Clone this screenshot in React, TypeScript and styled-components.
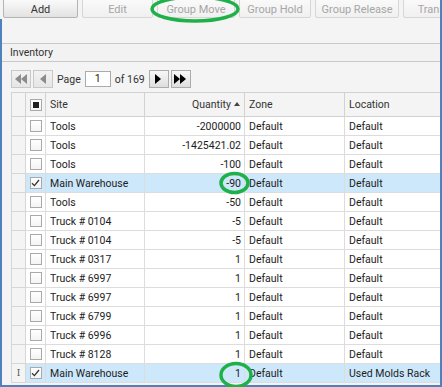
import React from "react";
import styled, { createGlobalStyle } from "styled-components";

const GlobalStyle = createGlobalStyle`
  html, body {
    margin: 0;
    padding: 0;
    background: #ffffff;
  }
  body {
    font-family: Roboto, "Open Sans", Arial, sans-serif;
    font-size: 10.5px;
    color: #222222;
  }
`;

const Page = styled.div`
  position: relative;
  width: 442px;
  height: 387px;
  overflow: hidden;
  background: #f4f4f4;
`;

// top toolbar with the action buttons
const Toolbar = styled.div`
  display: flex;
  gap: 4px;
  height: 19px;
  padding-left: 3px;
  background: #f4f4f4;
  border-right: 2px solid #4f81bd;
  overflow: hidden;
`;

const ToolButton = styled.div<{ $w: number; $enabled?: boolean }>`
  flex: 0 0 ${(p) => p.$w}px;
  height: 20px;
  margin-top: -2px;
  box-sizing: border-box;
  border: 1px solid ${(p) => (p.$enabled ? "#b4b4b4" : "#d6d6d6")};
  border-radius: 2px;
  background: ${(p) =>
    p.$enabled
      ? "linear-gradient(#fbfbfb, #e2e2e2)"
      : "linear-gradient(#fafafa, #f0f0f0)"};
  color: ${(p) => (p.$enabled ? "#333333" : "#a6a6a6")};
  font-size: 11px;
  line-height: 21px;
  text-align: center;
  white-space: nowrap;
  overflow: hidden;
`;

const Body = styled.div`
  height: 366px;
  border-left: 2px solid #4f81bd;
  border-right: 2px solid #4f81bd;
  border-bottom: 2px solid #4f81bd;
  display: flex;
  flex-direction: column;
`;

const Spacer = styled.div`
  height: 24px;
  background: #f4f4f4;
`;

const SectionHeader = styled.div`
  height: 17px;
  border-top: 1px solid #c9c9c9;
  border-bottom: 1px solid #c9c9c9;
  background: #f2f2f2;
  padding-left: 8px;
  font-size: 10.5px;
  line-height: 17px;
  color: #333333;
`;

const Content = styled.div`
  flex: 1;
  padding: 8px 0 0 9px;
  display: flex;
  flex-direction: column;
  gap: 4px;
  overflow: hidden;
`;

const Pager = styled.div`
  display: flex;
  align-items: center;
  height: 18px;
  gap: 2px;
`;

const PagerButton = styled.div<{ $enabled?: boolean }>`
  width: 20px;
  height: 18px;
  box-sizing: border-box;
  border: 1px solid ${(p) => (p.$enabled ? "#acacac" : "#c8c8c8")};
  background: ${(p) =>
    p.$enabled ? "linear-gradient(#f8f8f8, #dedede)" : "linear-gradient(#f2f2f2, #e6e6e6)"};
  display: flex;
  align-items: center;
  justify-content: center;
`;

const PagerText = styled.span`
  font-size: 10.5px;
  color: #333333;
  margin: 0 2px;
`;

const PageInput = styled.div`
  width: 26px;
  height: 16px;
  box-sizing: border-box;
  border: 1px solid #aaaaaa;
  background: #ffffff;
  font-size: 10.5px;
  line-height: 14px;
  text-align: center;
  color: #222222;
`;

const Grid = styled.table`
  border-collapse: collapse;
  table-layout: fixed;
  width: 431px;
  background: #ffffff;
`;

const HeadCell = styled.th<{ $align?: string }>`
  height: 24px;
  padding: 0 4px;
  box-sizing: border-box;
  border: 1px solid #d2d2d2;
  background: #f4f4f4;
  font-weight: normal;
  font-size: 10.5px;
  color: #333333;
  text-align: ${(p) => p.$align || "left"};
  white-space: nowrap;
  overflow: hidden;
`;

const Row = styled.tr<{ $selected?: boolean }>`
  height: 19px;
  background: ${(p) => (p.$selected ? "#cde8fb" : "#ffffff")};
`;

const Cell = styled.td<{ $align?: string }>`
  padding: 0 3px 0 4px;
  border: 1px solid #dcdcdc;
  font-size: 10.5px;
  color: #1c1c1c;
  text-align: ${(p) => p.$align || "left"};
  white-space: nowrap;
  overflow: hidden;
`;

const RowHeadCell = styled.td`
  padding: 0;
  border: 1px solid #d6d6d6;
  background: #f4f4f4;
  text-align: center;
  font-size: 9px;
  color: #555555;
  font-family: "DejaVu Serif", serif;
`;

const BoxCell = styled.td`
  padding: 0;
  border: 1px solid #dcdcdc;
`;

const CheckBox = styled.div`
  width: 12px;
  height: 12px;
  box-sizing: border-box;
  margin: 0 auto;
  border: 1px solid #a9a9a9;
  background: linear-gradient(#ffffff, #f4f4f4);
  display: flex;
  align-items: center;
  justify-content: center;
`;

const Indeterminate = styled.div`
  width: 6px;
  height: 6px;
  background: #1e1e1e;
`;

const SortArrow = styled.span`
  display: inline-block;
  margin-left: 3px;
  width: 0;
  height: 0;
  border-left: 3.5px solid transparent;
  border-right: 3.5px solid transparent;
  border-bottom: 4px solid #444444;
  vertical-align: 2px;
`;

const Overlay = styled.svg`
  position: absolute;
  left: 0;
  top: 0;
  pointer-events: none;
`;

const rows = [
  { site: "Tools", qty: "-2000000", zone: "Default", loc: "Default" },
  { site: "Tools", qty: "-1425421.02", zone: "Default", loc: "Default" },
  { site: "Tools", qty: "-100", zone: "Default", loc: "Default" },
  { site: "Main Warehouse", qty: "-90", zone: "Default", loc: "Default", sel: true },
  { site: "Tools", qty: "-50", zone: "Default", loc: "Default" },
  { site: "Truck # 0104", qty: "-5", zone: "Default", loc: "Default" },
  { site: "Truck # 0104", qty: "-5", zone: "Default", loc: "Default" },
  { site: "Truck # 0317", qty: "1", zone: "Default", loc: "Default" },
  { site: "Truck # 6997", qty: "1", zone: "Default", loc: "Default" },
  { site: "Truck # 6997", qty: "1", zone: "Default", loc: "Default" },
  { site: "Truck # 6799", qty: "1", zone: "Default", loc: "Default" },
  { site: "Truck # 6996", qty: "1", zone: "Default", loc: "Default" },
  { site: "Truck # 8128", qty: "1", zone: "Default", loc: "Default" },
  { site: "Main Warehouse", qty: "1", zone: "Default", loc: "Used Molds Rack", sel: true, cursor: true },
];

const Check = () => (
  <svg width="9" height="8" viewBox="0 0 9 8">
    <path d="M1 4.2 L3.4 6.6 L8 1" fill="none" stroke="#333" strokeWidth="1.3" />
  </svg>
);

const Arrows = ({ dir, double, color }: { dir: "l" | "r"; double?: boolean; color: string }) => {
  const one = (x: number) =>
    dir === "l" ? `M${x + 6} 1 L${x} 6 L${x + 6} 11 Z` : `M${x} 1 L${x + 6} 6 L${x} 11 Z`;
  return (
    <svg width={double ? 13 : 7} height="12" viewBox={`0 0 ${double ? 13 : 7} 12`}>
      <path d={one(0)} fill={color} />
      {double && <path d={one(6)} fill={color} />}
    </svg>
  );
};

export default function App() {
  return (
    <Page>
      <GlobalStyle />
      <Toolbar>
        <ToolButton $w={75} $enabled>Add</ToolButton>
        <ToolButton $w={71}>Edit</ToolButton>
        <ToolButton $w={78}>Group Move</ToolButton>
        <ToolButton $w={72}>Group Hold</ToolButton>
        <ToolButton $w={84}>Group Release</ToolButton>
        <ToolButton $w={70}>Transfer</ToolButton>
      </Toolbar>
      <Body>
        <Spacer />
        <SectionHeader>Inventory</SectionHeader>
        <Content>
          <Pager>
            <PagerButton><Arrows dir="l" double color="#8c8c8c" /></PagerButton>
            <PagerButton><Arrows dir="l" color="#8c8c8c" /></PagerButton>
            <PagerText>Page</PagerText>
            <PageInput>1</PageInput>
            <PagerText>of 169</PagerText>
            <PagerButton $enabled><Arrows dir="r" color="#000" /></PagerButton>
            <PagerButton $enabled><Arrows dir="r" double color="#000" /></PagerButton>
          </Pager>
          <Grid>
            <colgroup>
              <col style={{ width: 14 }} />
              <col style={{ width: 20 }} />
              <col style={{ width: 99 }} />
              <col style={{ width: 100 }} />
              <col style={{ width: 100 }} />
              <col style={{ width: 98 }} />
            </colgroup>
            <thead>
              <tr>
                <HeadCell />
                <HeadCell style={{ padding: 0 }}>
                  <CheckBox><Indeterminate /></CheckBox>
                </HeadCell>
                <HeadCell>Site</HeadCell>
                <HeadCell $align="right">
                  Quantity
                  <SortArrow />
                </HeadCell>
                <HeadCell>Zone</HeadCell>
                <HeadCell>Location</HeadCell>
              </tr>
            </thead>
            <tbody>
              {rows.map((r, i) => (
                <Row key={i} $selected={r.sel}>
                  <RowHeadCell>{r.cursor ? "I" : ""}</RowHeadCell>
                  <BoxCell>
                    <CheckBox>{r.sel && <Check />}</CheckBox>
                  </BoxCell>
                  <Cell>{r.site}</Cell>
                  <Cell $align="right">{r.qty}</Cell>
                  <Cell>{r.zone}</Cell>
                  <Cell>{r.loc}</Cell>
                </Row>
              ))}
            </tbody>
          </Grid>
        </Content>
      </Body>
      <Overlay width="442" height="387" viewBox="0 0 442 387">
        <g fill="none" stroke="#1fb04a" strokeWidth="3.5">
          <ellipse cx="195" cy="9" rx="43" ry="12" />
          <ellipse cx="234.5" cy="183" rx="13.5" ry="9.5" />
          <ellipse cx="236" cy="375" rx="15" ry="11.5" />
        </g>
      </Overlay>
    </Page>
  );
}
